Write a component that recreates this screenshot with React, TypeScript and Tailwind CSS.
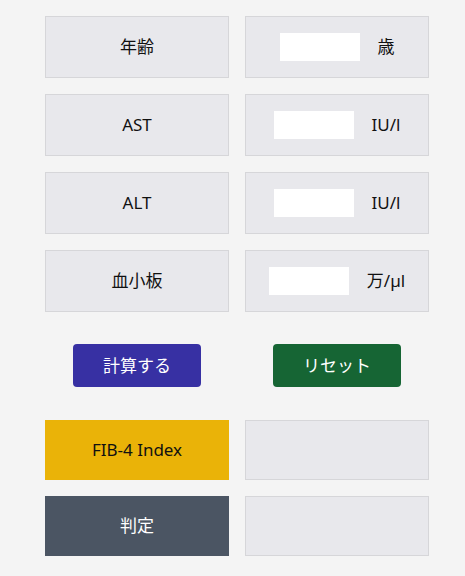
const font = { fontFamily: '"Noto Sans", "Noto Sans CJK JP", sans-serif' }

const rows = [
  { label: '年齢', unit: '歳' },
  { label: 'AST', unit: 'IU/l' },
  { label: 'ALT', unit: 'IU/l' },
  { label: '血小板', unit: '万/µl' },
]

const cell = 'flex h-[62px] items-center justify-center border border-[#d6d6d9] bg-[#e8e8ec]'

export default function App() {
  return (
    <div className="min-h-[576px] bg-[#f4f4f4] pl-[45px] pt-4" style={font}>
      <div className="flex w-[384px] flex-col gap-4">
        {rows.map((r) => (
          <div key={r.label} className="grid grid-cols-2 gap-4">
            <div className={cn(cell, 'text-[17px] text-[#111]')}>{r.label}</div>
            <div className={cn(cell, 'gap-[18px]')}>
              <input className="h-7 w-20 border-0 bg-white outline-none" />
              <span className="text-[17px] text-[#111]">{r.unit}</span>
            </div>
          </div>
        ))}
      </div>
      <div className="mt-8 grid w-[384px] grid-cols-2 gap-4">
        <div className="flex justify-center">
          <button className="h-[43px] w-32 rounded bg-[#3730a3] text-[17px] text-white">計算する</button>
        </div>
        <div className="flex justify-center">
          <button className="h-[43px] w-32 rounded bg-[#166534] text-[17px] text-white">リセット</button>
        </div>
      </div>
      <div className="mt-[33px] flex w-[384px] flex-col gap-4">
        <div className="grid grid-cols-2 gap-4">
          <div className="flex h-[60px] items-center justify-center bg-[#eab308] text-[17px] text-[#111]">FIB-4 Index</div>
          <div className="h-[60px] border border-[#d6d6d9] bg-[#e8e8ec]" />
        </div>
        <div className="grid grid-cols-2 gap-4">
          <div className="flex h-[60px] items-center justify-center bg-[#4b5563] text-[17px] text-white">判定</div>
          <div className="h-[60px] border border-[#d6d6d9] bg-[#e8e8ec]" />
        </div>
      </div>
    </div>
  )
}

function cn(...c: string[]) {
  return c.join(' ')
}
